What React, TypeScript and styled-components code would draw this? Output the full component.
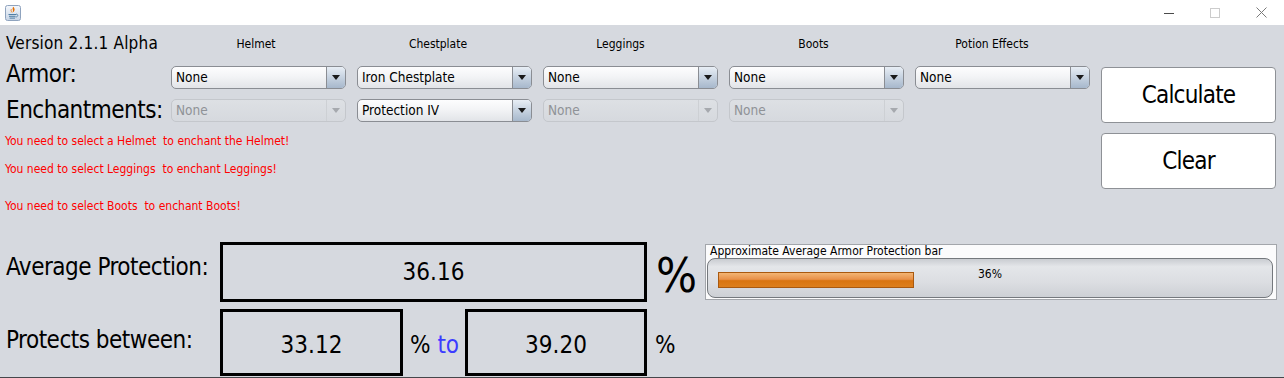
import React from 'react';
import styled, { createGlobalStyle } from 'styled-components';

const UI_FONT = `"DejaVu Sans Condensed", "Liberation Sans", Arial, sans-serif`;

const GlobalStyle = createGlobalStyle`
  html, body {
    margin: 0;
    padding: 0;
    height: 378px;
    overflow: hidden;
    background: #d6d9df;
  }
  body {
    font-family: ${UI_FONT};
    color: #000;
  }
`;

const Window = styled.div`
  width: 1284px;
  height: 378px;
  display: flex;
  flex-direction: column;
  background: #d6d9df;
  overflow: hidden;
`;

// title bar
const TitleBar = styled.div`
  height: 25px;
  flex: none;
  background: #fff;
  display: flex;
  align-items: center;
  justify-content: space-between;
  padding-left: 5px;
`;

const WinControls = styled.div`
  display: flex;
  height: 100%;
`;

const WinButton = styled.div`
  width: 46px;
  height: 25px;
  display: flex;
  align-items: center;
  justify-content: center;
`;

const Content = styled.div`
  flex: 1;
  display: flex;
  flex-direction: column;
  padding-left: 6px;
  min-height: 0;
`;

const BottomStrip = styled.div`
  height: 1px;
  flex: none;
  background: #45474b;
`;

// top form
const TopGrid = styled.div`
  display: grid;
  grid-template-columns: 154px repeat(5, 175px) 175px;
  grid-template-rows: 31px 23px 23px auto;
  column-gap: 11px;
  row-gap: 10px;
`;

const VersionLabel = styled.div`
  padding-top: 8px;
  font-size: 17px;
  letter-spacing: 0.2px;
  line-height: 20px;
  white-space: nowrap;
`;

const ColumnHeader = styled.div<{ $shift: number }>`
  padding-top: 12px;
  padding-right: ${(p) => p.$shift * 2}px;
  font-size: 12px;
  line-height: 14px;
  text-align: center;
  white-space: nowrap;
`;

const RowLabel = styled.div<{ $lift?: number }>`
  margin-top: ${(p) => -(p.$lift || 0)}px;
  font-size: 24px;
  letter-spacing: -0.5px;
  line-height: 23px;
  white-space: nowrap;
`;

const ComboBox = styled.div<{ $disabled?: boolean }>`
  height: 23px;
  box-sizing: border-box;
  display: flex;
  align-items: stretch;
  border: 1px solid ${(p) => (p.$disabled ? '#c4c7cc' : '#8a8d93')};
  border-radius: 5px;
  overflow: hidden;
  background: ${(p) =>
    p.$disabled
      ? 'linear-gradient(#dde0e4, #d6d9de)'
      : 'linear-gradient(#fdfdfe 0%, #f3f4f6 45%, #e2e4e8 100%)'};
`;

const ComboValue = styled.span<{ $disabled?: boolean }>`
  flex: 1;
  padding-left: 4px;
  font-size: 13.5px;
  line-height: 21px;
  color: ${(p) => (p.$disabled ? '#8f9297' : '#000')};
  white-space: nowrap;
  overflow: hidden;
`;

const ArrowButton = styled.span<{ $disabled?: boolean }>`
  width: 18px;
  flex: none;
  display: flex;
  align-items: center;
  justify-content: center;
  border-left: 1px solid ${(p) => (p.$disabled ? '#cdd0d4' : '#8a8d93')};
  background: ${(p) =>
    p.$disabled ? 'transparent' : 'linear-gradient(#e8eef5, #c6d2e0 50%, #a7b8cc)'};
`;

const Triangle = styled.span<{ $disabled?: boolean }>`
  width: 0;
  height: 0;
  border-left: 4px solid transparent;
  border-right: 4px solid transparent;
  border-top: 5px solid ${(p) => (p.$disabled ? '#a6a9ae' : '#1a1a1a')};
`;

const ActionButton = styled.button<{ $row: string }>`
  grid-column: 7;
  grid-row: ${(p) => p.$row};
  align-self: start;
  margin-top: 1px;
  height: 56px;
  box-sizing: border-box;
  background: #fff;
  border: 1px solid #8e9196;
  border-radius: 4px;
  font-family: ${UI_FONT};
  font-size: 24px;
  letter-spacing: -0.8px;
  color: #000;
  padding: 0;
`;

const Messages = styled.div`
  grid-column: 1 / span 6;
  grid-row: 4;
  display: flex;
  flex-direction: column;
  padding-top: 2px;
  margin-left: -1px;
`;

const Warning = styled.div<{ $gap: number }>`
  margin-top: ${(p) => p.$gap}px;
  font-size: 12px;
  line-height: 14px;
  color: #ff0000;
  white-space: pre;
`;

// results
const BottomGrid = styled.div`
  margin-top: 29px;
  display: grid;
  grid-template-columns: 214px 183px 62px 182px 58px 1fr;
  grid-template-rows: 60px 67px;
  row-gap: 7px;
`;

const ResultLabel = styled.div<{ $top: number }>`
  padding-top: ${(p) => p.$top}px;
  font-size: 24px;
  letter-spacing: -0.5px;
  line-height: 28px;
  white-space: nowrap;
`;

const ValueBox = styled.div<{ $span?: string; $nudge?: number }>`
  grid-column: ${(p) => p.$span || 'auto'};
  border: 3px solid #000;
  display: flex;
  align-items: center;
  justify-content: center;
  padding-top: ${(p) => p.$nudge || 0}px;
  font-size: 24px;
  box-sizing: border-box;
`;

const BigPercent = styled.div`
  padding: 9px 0 0 9px;
  font-size: 48px;
  line-height: 48px;
`;

const UnitText = styled.div<{ $left: number }>`
  padding: 22px 0 0 ${(p) => p.$left}px;
  font-size: 24px;
  line-height: 28px;
  white-space: pre;
`;

const Blue = styled.span`
  color: #3c3cff;
`;

const ProgressPanel = styled.div`
  margin: 2px 7px 0 0;
  height: 56px;
  box-sizing: border-box;
  border: 1px solid #a3a6ab;
  background: #fbfbfc;
  display: flex;
  flex-direction: column;
`;

const PanelTitle = styled.div`
  padding-left: 4px;
  font-size: 12px;
  line-height: 13px;
  white-space: nowrap;
`;

const Bar = styled.div`
  position: relative;
  margin: 0 3px 0 1px;
  height: 40px;
  box-sizing: border-box;
  border: 1px solid #74787d;
  border-radius: 8px;
  background: linear-gradient(#c9ccd1 0%, #e4e6e9 20%, #dcdee2 60%, #cdd0d5 100%);
`;

const Track = styled.div`
  position: absolute;
  left: 10px;
  right: 10px;
  top: 13px;
  height: 16px;
`;

const Fill = styled.div`
  height: 100%;
  box-sizing: border-box;
  border: 1px solid #a9590f;
  background: linear-gradient(#f3b574 0%, #e8914a 45%, #d9740f 55%, #dd7f1c 100%);
`;

const BarText = styled.div`
  position: absolute;
  left: 0;
  right: 0;
  top: 9px;
  text-align: center;
  font-size: 12px;
  line-height: 12px;
`;

type ComboProps = { value: string; disabled?: boolean };

const Combo: React.FC<ComboProps> = ({ value, disabled }) => (
  <ComboBox $disabled={disabled}>
    <ComboValue $disabled={disabled}>{value}</ComboValue>
    <ArrowButton $disabled={disabled}>
      <Triangle $disabled={disabled} />
    </ArrowButton>
  </ComboBox>
);

const JavaIcon = () => (
  <svg width="16" height="16" viewBox="0 0 16 16">
    <defs>
      <linearGradient id="jicon" x1="0" y1="0" x2="0" y2="1">
        <stop offset="0" stopColor="#f5f8fc" />
        <stop offset="1" stopColor="#c7d4e5" />
      </linearGradient>
    </defs>
    <rect x="0.5" y="0.5" width="15" height="15" rx="2" fill="url(#jicon)" stroke="#8fa3be" />
    <path d="M8.4 1.8 C6.2 4 9.4 5 7.2 7.8 C9.6 6.6 10.6 4.6 8.4 1.8 Z" fill="#e76f00" />
    <path d="M6.4 4.2 C5.2 5.4 7 6.2 6.2 7.4" stroke="#e76f00" strokeWidth="0.8" fill="none" />
    <path d="M3.5 9.5 H11 M4 11.3 H10.5 M4.6 13.1 H10" stroke="#4f7fa6" strokeWidth="1" />
    <path d="M11 9 C13.4 9 13.4 12 10.6 12" stroke="#4f7fa6" strokeWidth="0.9" fill="none" />
  </svg>
);

const PERCENT = 36;

const App: React.FC = () => {
  return (
    <Window>
      <GlobalStyle />
      <TitleBar>
        <JavaIcon />
        <WinControls>
          <WinButton>
            <svg width="10" height="10" viewBox="0 0 10 10">
              <path d="M0 5.5 H10" stroke="#4a4a4a" strokeWidth="1" />
            </svg>
          </WinButton>
          <WinButton>
            <svg width="10" height="10" viewBox="0 0 10 10">
              <rect x="0.5" y="0.5" width="9" height="9" fill="none" stroke="#cccccc" />
            </svg>
          </WinButton>
          <WinButton>
            <svg width="11" height="11" viewBox="0 0 11 11">
              <path d="M0.5 0.5 L10.5 10.5 M10.5 0.5 L0.5 10.5" stroke="#7a7a7a" strokeWidth="1" />
            </svg>
          </WinButton>
        </WinControls>
      </TitleBar>

      <Content>
        <TopGrid>
          <VersionLabel>Version 2.1.1 Alpha</VersionLabel>
          <ColumnHeader $shift={2.5}>Helmet</ColumnHeader>
          <ColumnHeader $shift={6.5}>Chestplate</ColumnHeader>
          <ColumnHeader $shift={10}>Leggings</ColumnHeader>
          <ColumnHeader $shift={3}>Boots</ColumnHeader>
          <ColumnHeader $shift={10.5}>Potion Effects</ColumnHeader>
          <div />

          <RowLabel $lift={3}>Armor:</RowLabel>
          <Combo value="None" />
          <Combo value="Iron Chestplate" />
          <Combo value="None" />
          <Combo value="None" />
          <Combo value="None" />
          <ActionButton $row="2 / span 2">Calculate</ActionButton>

          <RowLabel>Enchantments:</RowLabel>
          <Combo value="None" disabled />
          <Combo value="Protection IV" />
          <Combo value="None" disabled />
          <Combo value="None" disabled />

          <Messages>
            <Warning $gap={0}>You need to select a Helmet  to enchant the Helmet!</Warning>
            <Warning $gap={14}>You need to select Leggings  to enchant Leggings!</Warning>
            <Warning $gap={23}>You need to select Boots  to enchant Boots!</Warning>
          </Messages>
          <ActionButton $row="4">Clear</ActionButton>
        </TopGrid>

        <BottomGrid>
          <ResultLabel $top={11}>Average Protection:</ResultLabel>
          <ValueBox $span="2 / 5">36.16</ValueBox>
          <BigPercent>%</BigPercent>
          <ProgressPanel>
            <PanelTitle>Approximate Average Armor Protection bar</PanelTitle>
            <Bar>
              <Track>
                <Fill style={{ width: `${PERCENT}%` }} />
              </Track>
              <BarText>{PERCENT}%</BarText>
            </Bar>
          </ProgressPanel>

          <ResultLabel $top={17}>Protects between:</ResultLabel>
          <ValueBox $nudge={4}>33.12</ValueBox>
          <UnitText $left={7}>
            % <Blue>to</Blue>
          </UnitText>
          <ValueBox $nudge={4}>39.20</ValueBox>
          <UnitText $left={8}>%</UnitText>
        </BottomGrid>
      </Content>
      <BottomStrip />
    </Window>
  );
};

export default App;
